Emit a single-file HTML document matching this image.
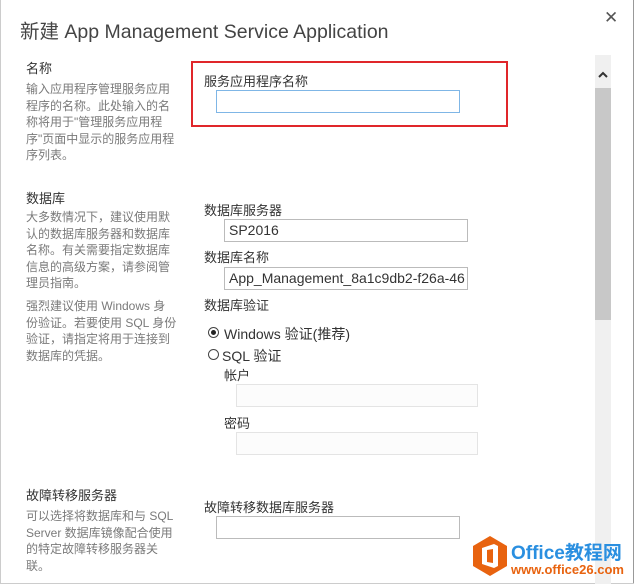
<!DOCTYPE html>
<html><head><meta charset="utf-8"><style>
body{margin:0;width:634px;height:584px;overflow:hidden;background:#fff;font-family:"Liberation Sans","Noto Sans CJK SC",sans-serif;position:relative}
.a{position:absolute;white-space:nowrap}
.t{font-size:19.5px;color:#444;left:20px;top:15px}
.h{font-size:13px;color:#333}
.d{font-size:12px;color:#7a7a7a;line-height:16.5px;left:26px}
.l{font-size:13px;color:#333}
.in{position:absolute;border:1px solid #bbb;box-sizing:border-box;height:23px;font-size:14px;color:#333;padding:2px 0 0 4px;white-space:nowrap;overflow:hidden}
.dis{border-color:#e4e4e4;background:#fcfcfc}
.r{position:absolute;width:11px;height:11px;border:1px solid #444;border-radius:50%;box-sizing:border-box}
</style></head><body>
<div class="a" style="left:0;top:0;width:1px;height:584px;background:#ccc"></div>
<div class="a" style="left:633px;top:0;width:1px;height:584px;background:#999"></div>
<div class="a" style="left:0;top:583px;width:634px;height:1px;background:#ccc"></div>
<div class="a t">新建 App Management Service Application</div>
<div class="a" style="left:604px;top:8px;font-size:17px;color:#555">✕</div>

<div class="a h" style="left:26px;top:58px">名称</div>
<div class="a d" style="top:81px">输入应用程序管理服务应用<br>程序的名称。此处输入的名<br>称将用于"管理服务应用程<br>序"页面中显示的服务应用程<br>序列表。</div>

<div class="a" style="left:191px;top:61px;width:317px;height:66px;border:2px solid #e0262a;box-sizing:border-box"></div>
<div class="a l" style="left:204px;top:71px">服务应用程序名称</div>
<div class="in" style="left:216px;top:90px;width:244px;height:23px;border-color:#7fb6e6"></div>

<div class="a h" style="left:26px;top:188px">数据库</div>
<div class="a d" style="top:209px">大多数情况下，建议使用默<br>认的数据库服务器和数据库<br>名称。有关需要指定数据库<br>信息的高级方案，请参阅管<br>理员指南。</div>
<div class="a d" style="top:298px">强烈建议使用 Windows 身<br>份验证。若要使用 SQL 身份<br>验证，请指定将用于连接到<br>数据库的凭据。</div>

<div class="a l" style="left:204px;top:200px">数据库服务器</div>
<div class="in" style="left:224px;top:219px;width:244px">SP2016</div>
<div class="a l" style="left:204px;top:247px">数据库名称</div>
<div class="in" style="left:224px;top:267px;width:244px">App_Management_8a1c9db2-f26a-46</div>
<div class="a l" style="left:204px;top:295px">数据库验证</div>
<div class="r" style="left:208px;top:327px"></div><div class="a" style="left:211px;top:330px;width:5px;height:5px;border-radius:50%;background:#222"></div>
<div class="a" style="left:224px;top:324px;font-size:14px;color:#333">Windows 验证(推荐)</div>
<div class="r" style="left:208px;top:349px"></div>
<div class="a" style="left:222px;top:346px;font-size:14px;color:#333">SQL 验证</div>
<div class="a l" style="left:224px;top:365px">帐户</div>
<div class="in dis" style="left:236px;top:384px;width:242px"></div>
<div class="a l" style="left:224px;top:413px">密码</div>
<div class="in dis" style="left:236px;top:432px;width:242px"></div>

<div class="a h" style="left:26px;top:485px">故障转移服务器</div>
<div class="a d" style="top:508px">可以选择将数据库和与 SQL<br>Server 数据库镜像配合使用<br>的特定故障转移服务器关<br>联。</div>
<div class="a l" style="left:204px;top:497px">故障转移数据库服务器</div>
<div class="in" style="left:216px;top:516px;width:244px"></div>

<div class="a" style="left:595px;top:55px;width:16px;height:529px;background:#f0f0f0"></div>
<div class="a" style="left:595px;top:88px;width:16px;height:232px;background:#c8c8c8"></div>
<svg class="a" style="left:597px;top:70px" width="12" height="10"><path d="M2 7 L6 3 L10 7" stroke="#333" stroke-width="2" fill="none"/></svg>

<svg class="a" style="left:470px;top:534px" width="40" height="44"><path d="M20 2 L37 12 L37 32 L20 42 L3 32 L3 12 Z" fill="#e8630f"/><path d="M12 14 L24 10 L28 12 L28 32 L24 34 L12 30 Z M17 16 L17 28 L23 29 L23 15 Z" fill="#fff"/></svg>
<div class="a" style="left:511px;top:538px;font-size:19px;font-weight:bold;color:#2a8fe0">Office教程网</div>
<div class="a" style="left:511px;top:562px;font-size:13px;font-weight:bold;color:#e8630f">www.office26.com</div>
</body></html>
